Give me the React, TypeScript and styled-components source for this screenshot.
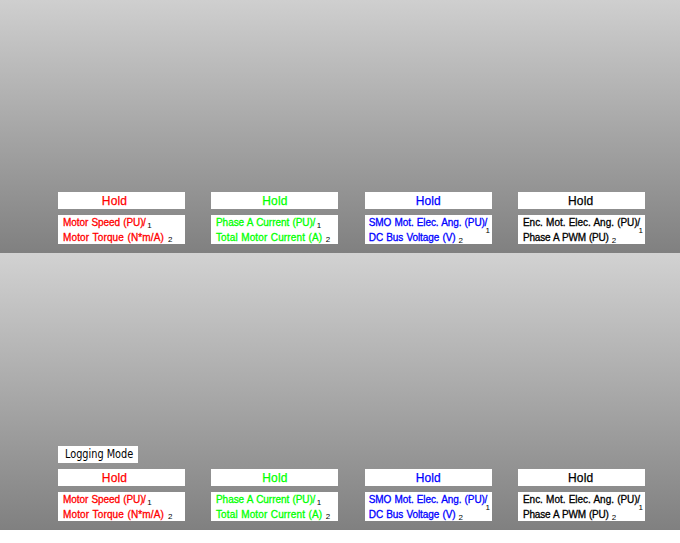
import React from 'react';
import styled, { createGlobalStyle } from 'styled-components';

const GlobalStyle = createGlobalStyle`
  *, *::before, *::after { box-sizing: border-box; }
  html, body { margin: 0; background: #fff; }
`;

const Page = styled.main`
  display: flex;
  flex-direction: column;
  width: 680px;
  height: 543px;
  overflow: hidden;
  background: #fff;
  font-family: 'Liberation Sans', Arial, sans-serif;
`;

const ScopePanel = styled.section<{ $height: number; $top: string; $bottom: string }>`
  display: flex;
  flex-direction: column;
  justify-content: flex-end;
  gap: 6px;
  height: ${p => p.$height}px;
  padding: 0 35px 9px 58px;
  background: linear-gradient(${p => p.$top}, ${p => p.$bottom});
`;

const ModeLabel = styled.div`
  width: 80px;
  height: 17px;
  padding-left: 7px;
  background: #fff;
  color: #000;
  font: 12px/16px 'DejaVu Sans', sans-serif;
  white-space: nowrap;
`;

const ModeText = styled.span`
  display: inline-block;
  transform: scaleX(0.81);
  transform-origin: left;
`;

const Channels = styled.div`
  display: grid;
  grid-template-columns: 127px 127px 127px 127px;
  column-gap: 26.4px;
`;

const Channel = styled.div<{ $color: string }>`
  display: flex;
  flex-direction: column;
  gap: 6px;
  color: ${p => p.$color};
`;

const HoldButton = styled.button<{ $shift: number }>`
  display: block;
  width: 127px;
  height: 17px;
  padding: 0 ${p => p.$shift}px 0 0;
  border: 0;
  background: #fff;
  color: inherit;
  font: 12px/18px 'Liberation Sans', Arial, sans-serif;
  letter-spacing: 0.15px;
  text-align: center;
  -webkit-text-stroke: 0.25px currentColor;
`;

const SignalBox = styled.div<{ $inset: number }>`
  height: 29px;
  padding-left: ${p => p.$inset}px;
  background: #fff;
`;

const SignalLine = styled.div<{ $spacing: number }>`
  display: flex;
  height: 15px;
  font-size: 10px;
  line-height: 15px;
  letter-spacing: ${p => p.$spacing}px;
  word-spacing: 0.5px;
  white-space: pre;
  -webkit-text-stroke: 0.3px currentColor;
`;

const Slash = styled.span`
  margin-left: -0.4px;
`;

const Index = styled.sub<{ $gap: number; $drop: number }>`
  height: 15px;
  margin: ${p => p.$drop}px 0 0 ${p => p.$gap}px;
  color: #000;
  font-size: 8px;
  line-height: 15px;
  letter-spacing: 0;
  -webkit-text-stroke: 0;
`;

interface Signal { text: string; spacing: number; gap: number; drop: number; slash?: boolean }

const channels: { color: string; shift: number; inset: number; signals: Signal[] }[] = [
  { color: '#f00', shift: 14, inset: 5, signals: [
    { text: 'Motor Speed (PU)', slash: true, spacing: -0.07, gap: 1.5, drop: 3 },
    { text: 'Motor Torque (N*m/A)', spacing: 0.15, gap: 4, drop: 2 },
  ] },
  { color: '#0f0', shift: 0, inset: 4.6, signals: [
    { text: 'Phase A Current (PU)', slash: true, spacing: -0.04, gap: 1.5, drop: 3 },
    { text: 'Total Motor Current (A)', spacing: 0.13, gap: 3.5, drop: 2 },
  ] },
  { color: '#00f', shift: 0, inset: 4, signals: [
    { text: 'SMO Mot. Elec. Ang. (PU)', slash: true, spacing: -0.09, gap: -1.5, drop: 8 },
    { text: 'DC Bus Voltage (V)', spacing: -0.08, gap: 3, drop: 3 },
  ] },
  { color: '#000', shift: 2, inset: 4.8, signals: [
    { text: 'Enc. Mot. Elec. Ang. (PU)', slash: true, spacing: -0.03, gap: -1.5, drop: 8 },
    { text: 'Phase A PWM (PU)', spacing: -0.19, gap: 3, drop: 3 },
  ] },
];

function ChannelRow() {
  return (
    <Channels>
      {channels.map(channel => (
        <Channel key={channel.color} $color={channel.color}>
          <HoldButton $shift={channel.shift}>Hold</HoldButton>
          <SignalBox $inset={channel.inset}>
            {channel.signals.map((signal, i) => (
              <SignalLine key={signal.text} $spacing={signal.spacing}>
                {signal.text}
                {signal.slash && <Slash>/</Slash>}
                <Index $gap={signal.gap} $drop={signal.drop}>{i + 1}</Index>
              </SignalLine>
            ))}
          </SignalBox>
        </Channel>
      ))}
    </Channels>
  );
}

export default function App() {
  return (
    <>
      <GlobalStyle />
      <Page>
        <ScopePanel $height={253} $top="#cfcfcf" $bottom="#808080">
          <ChannelRow />
        </ScopePanel>
        <ScopePanel $height={277} $top="#d2d2d2" $bottom="#808080">
          <ModeLabel><ModeText>Logging Mode</ModeText></ModeLabel>
          <ChannelRow />
        </ScopePanel>
      </Page>
    </>
  );
}
